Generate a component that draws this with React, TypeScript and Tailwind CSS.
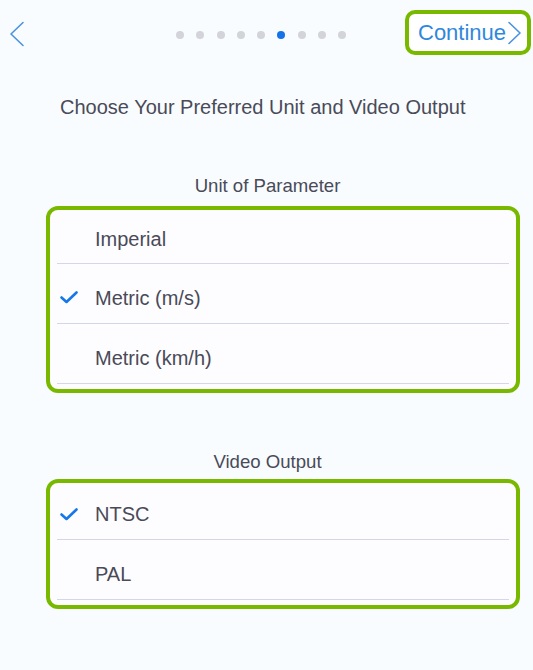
import { ReactNode } from 'react';

const units = ['Imperial', 'Metric (m/s)', 'Metric (km/h)'];
const outputs = ['NTSC', 'PAL'];

function Check() {
  return (
    <svg width="18" height="13" viewBox="0 0 18 13" className="shrink-0">
      <polyline points="1.5,6.5 6.5,11 16.5,1.5" fill="none" stroke="#1677e8" strokeWidth="2.6" strokeLinecap="round" strokeLinejoin="round" />
    </svg>
  );
}

function Row({ label, checked, top }: { label: string; checked?: boolean; top?: string }) {
  return (
    <div>
      <div className={`flex items-center ${top ?? 'h-[59px] pt-[8px]'}`}>
        <div className="w-[45px] flex justify-end pr-[17px]">{checked && <Check />}</div>
        <span className="text-[20px] text-[#4a4a58]">{label}</span>
      </div>
      <div className="mx-[7px] h-px bg-[#d6d6ea]" />
    </div>
  );
}

function Group({ children, bottom }: { children: ReactNode; bottom: string }) {
  return (
    <div className={`mx-[46px] mr-[13px] rounded-[12px] border-[4px] border-[#78b900] bg-[#fdfdff] ${bottom}`}>
      {children}
    </div>
  );
}

export default function App() {
  const dots = [0, 1, 2, 3, 4, 5, 6, 7, 8];
  return (
    <div className="h-[670px] w-full overflow-hidden bg-[#f8fcff]" style={{ fontFamily: '"Liberation Sans", Arial, sans-serif' }}>
      <div className="flex items-start h-[55px]">
        <svg width="16" height="26" viewBox="0 0 16 26" className="ml-[9px] mt-[21px]">
          <polyline points="14,1.5 2,13 14,24.5" fill="none" stroke="#4a93e0" strokeWidth="1.6" strokeLinecap="round" strokeLinejoin="round" />
        </svg>
        <div className="flex items-center gap-[12.3px] ml-[151px] mt-[31px]">
          {dots.map((d) => (
            <div key={d} className={`w-[8px] h-[8px] rounded-full ${d === 5 ? 'bg-[#1473e6]' : 'bg-[#d3d3da]'}`} />
          ))}
        </div>
        <div className="ml-auto mr-[2px] mt-[10px] h-[45px] w-[126px] rounded-[10px] border-[4px] border-[#78b900] bg-white flex items-center pl-[9px]">
          <span className="text-[22px] text-[#2f88dc] leading-none">Continue</span>
          <svg width="16" height="24" viewBox="0 0 16 24" className="ml-[1px]">
            <polyline points="2,1.5 13,12 2,22.5" fill="none" stroke="#4a93e0" strokeWidth="1.6" strokeLinecap="round" strokeLinejoin="round" />
          </svg>
        </div>
      </div>

      <div className="mt-[40px] pl-[60px] text-[20px] leading-[24px] text-[#4a4a58]">
        Choose Your Preferred Unit and Video Output
      </div>

      <div className="mt-[56px] text-center pl-[2px] text-[18.6px] leading-[22px] text-[#4a4a58]">Unit of Parameter</div>
      <div className="mt-[9px]">
        <Group bottom="pb-[5px]">
          {units.map((u, i) => (
            <Row key={u} label={u} checked={i === 1} top={i === 0 ? 'h-[53px] pt-[4px]' : undefined} />
          ))}
        </Group>
      </div>

      <div className="mt-[58px] text-center pl-[2px] text-[18.6px] leading-[22px] text-[#4a4a58]">Video Output</div>
      <div className="mt-[6px]">
        <Group bottom="pb-[5px]">
          {outputs.map((o, i) => (
            <Row key={o} label={o} checked={i === 0} top={i === 0 ? 'h-[56px] pt-[6px]' : undefined} />
          ))}
        </Group>
      </div>
    </div>
  );
}
